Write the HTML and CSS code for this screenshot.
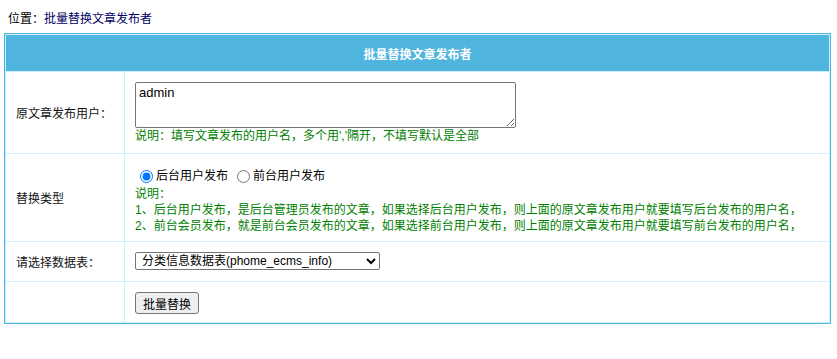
FILE: index.html
```html
<!DOCTYPE html>
<html lang="zh">
<head>
<meta charset="utf-8">
<title>批量替换文章发布者</title>
<link rel="stylesheet" href="styles.css">
</head>
<body>
<div class="nav">位置：<a href="#" class="nav-link">批量替换文章发布者</a></div>
<table class="tableborder">
  <tr>
    <td class="header" colspan="2">批量替换文章发布者</td>
  </tr>
  <tr class="row-user">
    <td class="label">原文章发布用户：</td>
    <td class="field">
      <textarea class="users">admin</textarea>
      <div class="note">说明：填写文章发布的用户名，多个用','隔开，不填写默认是全部</div>
    </td>
  </tr>
  <tr class="row-type">
    <td class="label">替换类型</td>
    <td class="field">
      <div class="radios">
        <label class="radio"><input type="radio" name="type" checked>后台用户发布</label>
        <label class="radio"><input type="radio" name="type">前台用户发布</label>
      </div>
      <div class="note">说明：<br>1、后台用户发布，是后台管理员发布的文章，如果选择后台用户发布，则上面的原文章发布用户就要填写后台发布的用户名，<br>2、前台会员发布，就是前台会员发布的文章，如果选择前台用户发布，则上面的原文章发布用户就要填写前台发布的用户名，</div>
    </td>
  </tr>
  <tr class="row-table">
    <td class="label">请选择数据表：</td>
    <td class="field">
      <select class="tb">
        <option>分类信息数据表(phome_ecms_info)</option>
      </select>
    </td>
  </tr>
  <tr class="row-submit">
    <td class="label"></td>
    <td class="field"><button type="button" class="btn">批量替换</button></td>
  </tr>
</table>
</body>
</html>
```

FILE: styles.css
```css
body {
  margin: 0;
  font-family: "Liberation Sans", "Noto Sans CJK SC", sans-serif;
  font-size: 12px;
  color: #000;
  background: #fff;
}
.nav {
  padding: 11px 4px 6px 8px;
  line-height: 16px;
}
.nav-link {
  color: #000066;
  text-decoration: none;
}
.tableborder {
  margin-left: 4px;
  width: 827px;
  border: 1px solid #4fb4de;
  background: #c9f1ff;
  border-collapse: separate;
  border-spacing: 1px;
}
.tableborder td {
  background: #fff;
  padding: 0;
}
.tableborder td.header {
  background: #4fb4de;
  color: #fff;
  font-weight: bold;
  text-align: center;
  height: 36px;
}
.label {
  width: 108px;
  padding-left: 10px !important;
  vertical-align: middle;
  color: #111;
}
.field {
  padding: 10px !important;
  line-height: 16px;
}
.row-user .field { padding-bottom: 9px !important; }
.users {
  display: block;
  box-sizing: border-box;
  width: 381px;
  height: 46px;
  margin: 0;
  padding: 2px 3px;
  font-family: "Liberation Sans", "Noto Sans CJK SC", sans-serif;
  font-size: 13px;
  border: 1px solid #767676;
  border-radius: 2px;
  resize: vertical;
}
.note {
  color: #008000;
  line-height: 16px;
}
.radios {
  display: flex;
  align-items: center;
  height: 20px;
}
.radio {
  display: flex;
  align-items: center;
  margin-right: 4px;
}
.radio input {
  margin: 0 3px 0 5px;
  width: 13px;
  height: 13px;
}
.row-type .field { padding: 12px 10px 7px 10px !important; }
.tb {
  box-sizing: border-box;
  width: 245px;
  height: 18px;
  font-family: "Liberation Sans", "Noto Sans CJK SC", sans-serif;
  font-size: 12px;
  border: 1px solid #767676;
  border-radius: 2px;
  padding: 0 2px;
  display: block;
  background: #fff;
  color: #000;
}
.row-table .field { padding: 10px 10px 11px 10px !important; }
.btn {
  display: block;
  box-sizing: border-box;
  width: 64px;
  height: 22px;
  padding: 0;
  font-family: "Liberation Sans", "Noto Sans CJK SC", sans-serif;
  font-size: 12px;
  border: 1px solid #767676;
  border-radius: 3px;
  background: #efefef;
  color: #000;
}
.row-submit .field { padding: 10px 10px 8px 10px !important; }
```
